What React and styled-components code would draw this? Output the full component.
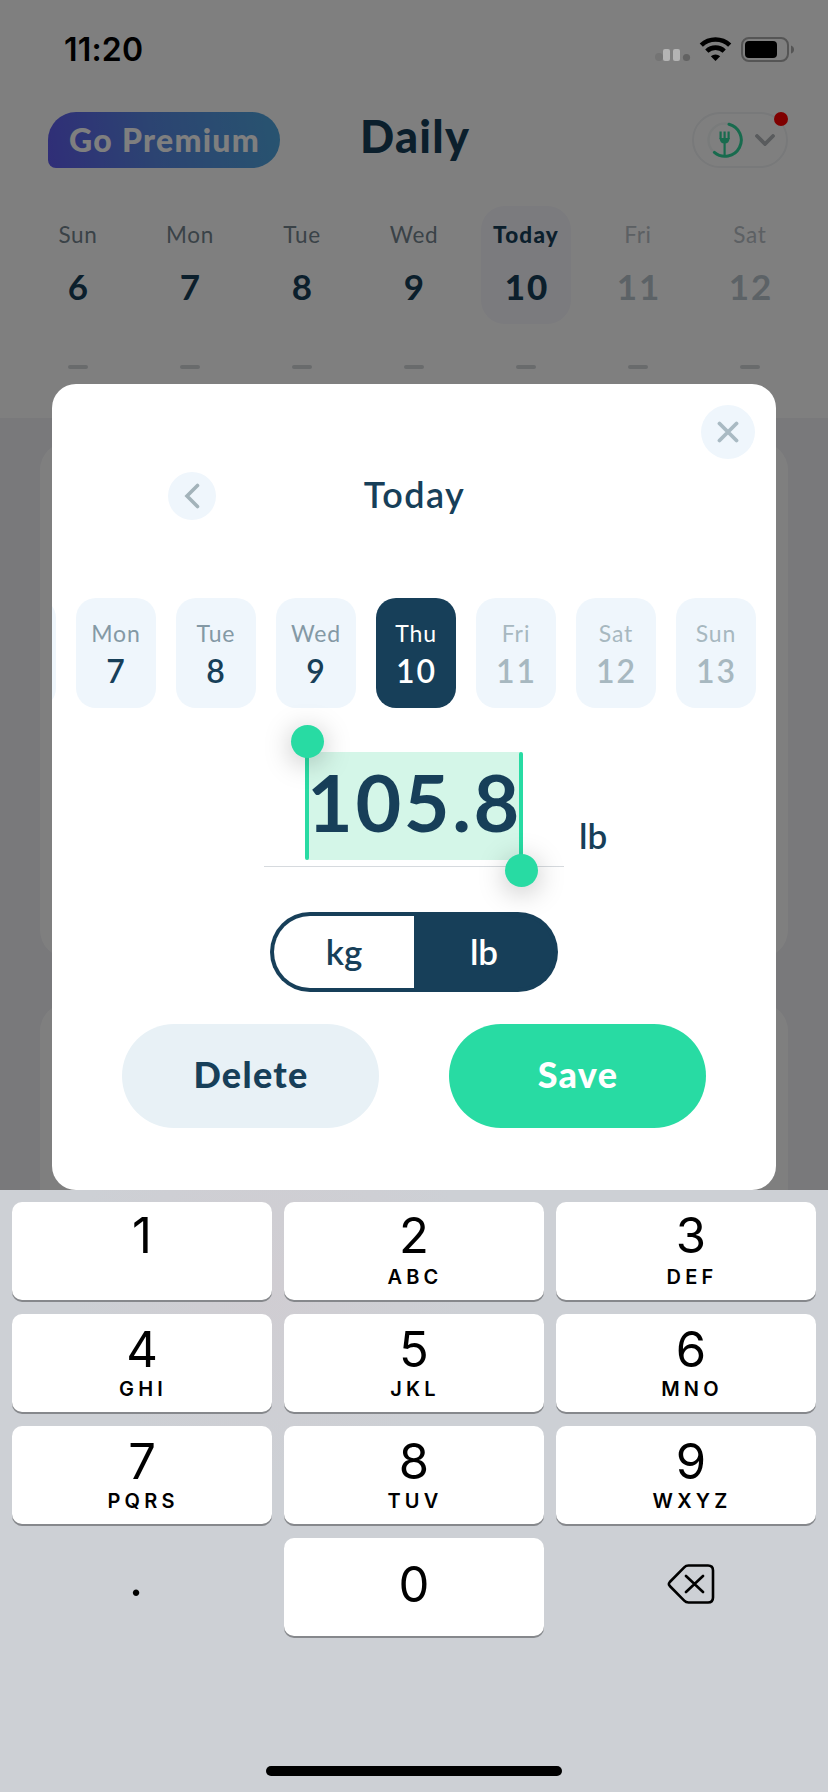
import { useState } from "react";
import styled, { createGlobalStyle } from "styled-components";

const navy = "#173f59";
const green = "#28dba3";

const GlobalStyle = createGlobalStyle`
  * {
    box-sizing: border-box;
  }
  body {
    margin: 0;
    font-family: Lato, "Open Sans", sans-serif;
    color: ${navy};
  }
  button {
    border: 0;
    padding: 0;
    background: none;
    color: inherit;
    font: inherit;
  }
`;

const Screen = styled.div`
  position: relative;
  width: 828px;
  height: 1792px;
  overflow: hidden;
  background: #f2f2f6;
`;

/* daily page behind the modal */
const DailyTop = styled.header`
  height: 418px;
  padding-top: 112px;
  background: #fff;
`;
const TitleBar = styled.div`
  display: grid;
  grid-template-columns: 232px 1fr 96px;
  height: 56px;
  padding: 0 40px 0 48px;
`;
const PremiumButton = styled.button`
  height: 56px;
  padding-left: 1px;
  border-radius: 28px 28px 28px 8px;
  background: linear-gradient(80deg, #605cf0, #5888e4 45%, #50a8e0);
  color: #fff;
  font-size: 32px;
  font-weight: 900;
  line-height: 52px;
  letter-spacing: 1.3px;
  white-space: nowrap;
`;
const PageTitle = styled.h1`
  margin: 0 0 0 6px;
  padding-left: 74px;
  font-size: 45px;
  font-weight: 900;
  line-height: 48px;
  letter-spacing: 1.3px;
`;
const ProfileButton = styled.button`
  position: relative;
  display: flex;
  align-items: center;
  justify-content: space-between;
  height: 56px;
  padding: 0 11px 0 13px;
  border: 2px solid #f0f2f4;
  border-radius: 28px;
`;
const RedDot = styled.span`
  position: absolute;
  top: -2px;
  right: -2px;
  width: 14px;
  height: 14px;
  border-radius: 50%;
  background: #f00;
`;
const Week = styled.div`
  display: grid;
  grid-template-columns: repeat(7, 90px);
  column-gap: 22px;
  padding: 38px 0 0 33px;
`;
const WeekDay = styled.div`
  display: flex;
  flex-direction: column;
  align-items: center;
  color: ${p => (p.future ? "#b8c4cc" : navy)};
`;
const WeekCell = styled.div`
  width: 90px;
  height: 118px;
  padding-top: 14px;
  border-radius: 24px;
  text-align: center;
  background: ${p => (p.today ? "#f6f6fc" : "transparent")};
`;
const WeekName = styled.div`
  height: 30px;
  font-size: 22.5px;
  line-height: 30px;
  letter-spacing: ${p => (p.today ? 1.2 : 0.7)}px;
  font-weight: ${p => (p.today ? 900 : 400)};
  color: ${p => (p.today ? navy : p.future ? "#b8c0c6" : "#74858f")};
`;
const WeekNumber = styled.div`
  margin-top: 16px;
  padding-left: 2px;
  font-size: 35px;
  line-height: 40px;
  letter-spacing: 2px;
  font-weight: ${p => (p.today ? 900 : 700)};
`;
const Dash = styled.div`
  width: 20px;
  height: 4px;
  margin-top: 41px;
  border-radius: 2px;
  background: #d2d6d8;
`;
const CardList = styled.main`
  display: flex;
  flex-direction: column;
  gap: 45px;
  padding: 24px 40px;
`;
const Card = styled.section`
  height: 516px;
  border-radius: 28px;
  background: #fff;
`;

/* everything drawn above the dimmed page */
const Overlay = styled.div`
  position: absolute;
  inset: 0;
  display: flex;
  flex-direction: column;
  background: rgba(0, 0, 0, 0.5);
`;
const StatusBar = styled.div`
  display: flex;
  align-items: flex-start;
  justify-content: space-between;
  height: 384px;
  padding: 30px 33px 0 64px;
`;
const Clock = styled.div`
  color: #000;
  font-family: Inter, sans-serif;
  font-size: 32px;
  font-weight: 600;
  line-height: 40px;
  letter-spacing: 0.2px;
`;
const StatusIcons = styled.svg`
  display: block;
  margin-top: 7px;
`;
const Modal = styled.section`
  display: flex;
  flex-direction: column;
  width: 724px;
  height: 806px;
  margin: 0 52px;
  overflow: hidden;
  border-radius: 24px;
  background: #fff;
`;
const CloseRow = styled.div`
  display: flex;
  justify-content: flex-end;
  padding: 21px 21px 0 0;
`;
const RoundButton = styled.button`
  display: flex;
  align-items: center;
  justify-content: center;
  width: ${p => p.size}px;
  height: ${p => p.size}px;
  border-radius: 50%;
  background: #eff6fc;
`;
const DateNav = styled.div`
  display: grid;
  grid-template-columns: 48px 1fr 48px;
  height: 48px;
  margin: 13px 116px 0;
`;
const DateTitle = styled.h2`
  margin: 0;
  padding-left: 1px;
  font-size: 36px;
  font-weight: 600;
  line-height: 44px;
  letter-spacing: 1.4px;
  text-align: center;
`;
const DayStrip = styled.div`
  display: flex;
  gap: 20px;
  margin: 78px 0 0 -76px;
`;
const DayPill = styled.button`
  flex: none;
  width: 80px;
  height: 110px;
  border-radius: 20px;
  text-align: center;
  background: ${p => (p.active ? navy : "#eff6fc")};
`;
const PillName = styled.div`
  font-size: 23px;
  line-height: 30px;
  letter-spacing: 0.9px;
  color: ${p => (p.active ? "#fff" : p.future ? "#a7b8c0" : "#8499a5")};
`;
const PillNumber = styled.div`
  margin-top: 6px;
  padding-left: 1px;
  font-size: 32px;
  font-weight: 600;
  line-height: 34px;
  letter-spacing: 2px;
  color: ${p => (p.active ? "#fff" : p.future ? "#a7b8c0" : navy)};
`;
const WeightRow = styled.div`
  display: flex;
  height: 115px;
  margin: 44px 0 0 212px;
`;
const WeightField = styled.div`
  display: flex;
  justify-content: center;
  width: 300px;
  border-bottom: 1px solid #d6dade;
`;
const Selection = styled.div`
  position: relative;
  width: 214px;
  height: 108px;
  background: #d4f6e8;
  font-size: 79px;
  font-weight: 700;
  line-height: 99px;
  letter-spacing: 2.6px;
  text-align: center;
  white-space: nowrap;
`;
const Handle = styled.span`
  position: absolute;
  top: 0;
  ${p => p.side}: -2px;
  width: 4px;
  height: 108px;
  border-radius: 2px;
  background: ${green};
  &::after {
    content: "";
    position: absolute;
    left: -14.5px;
    ${p => (p.side === "left" ? "top: -27px" : "bottom: -27px")};
    width: 33px;
    height: 33px;
    border-radius: 50%;
    background: ${green};
    box-shadow: 0 5px 28px rgba(0, 0, 0, 0.26);
  }
`;
const WeightUnit = styled.div`
  margin: 63px 0 0 15px;
  font-size: 35px;
  font-weight: 600;
  line-height: 40px;
`;
const UnitToggle = styled.div`
  display: grid;
  grid-template-columns: 1fr 1fr;
  width: 288px;
  height: 80px;
  margin: 45px auto 0;
  padding: 4px;
  border-radius: 40px;
  background: ${navy};
`;
const UnitButton = styled.button`
  height: 72px;
  padding: 0 0 3px;
  border-radius: 36px 0 0 36px;
  font-size: 35px;
  font-weight: 600;
  text-align: center;
  background: ${p => (p.active ? navy : "#fff")};
  color: ${p => (p.active ? "#fff" : navy)};
  &:last-child {
    border-radius: 0 36px 36px 0;
  }
`;
const Actions = styled.div`
  display: flex;
  gap: 70px;
  margin: 32px 70px 0;
`;
const ActionButton = styled.button`
  width: 257px;
  height: 104px;
  padding: 0 0 5px 1px;
  border-radius: 52px;
  font-size: 36px;
  font-weight: 900;
  letter-spacing: 1.3px;
  background: ${p => (p.primary ? green : "#e8f1f6")};
  color: ${p => (p.primary ? "#fff" : navy)};
`;

/* numeric keyboard */
const Keyboard = styled.div`
  flex: 1;
  padding: 12px;
  background: radial-gradient(
      ellipse 200px 200px at 270px 90px,
      #d0cdd2,
      transparent
    )
    #cdd0d5;
  color: #000;
  font-family: Inter, sans-serif;
`;
const Keys = styled.div`
  display: grid;
  grid-template-columns: repeat(3, 260px);
  gap: 14px 12px;
`;
const Key = styled.button`
  display: flex;
  flex-direction: column;
  align-items: center;
  height: 98px;
  padding-top: ${p => p.top}px;
  border-radius: 10px;
  background: ${p => (p.plain ? "none" : "#fff")};
  box-shadow: ${p => (p.plain ? "none" : "0 2px 0 #86888c")};
  /* the last column leans to the right, the dot to the left */
  &:nth-child(3n) {
    padding-left: 10px;
  }
  &:nth-child(10) {
    padding-right: 12px;
  }
`;
const KeyDigit = styled.span`
  font-size: 49px;
  line-height: 50px;
`;
const KeyLetters = styled.span`
  margin-top: ${p => p.top}px;
  padding-left: 2px;
  font-size: 20px;
  font-weight: 600;
  line-height: 24px;
  letter-spacing: 4.2px;
`;
const HomeBar = styled.div`
  width: 296px;
  height: 10px;
  margin: 130px auto 0;
  border-radius: 5px;
  background: #000;
`;

const week = [
  { name: "Sun", number: 6 },
  { name: "Mon", number: 7 },
  { name: "Tue", number: 8 },
  { name: "Wed", number: 9 },
  { name: "Today", number: 10, today: true },
  { name: "Fri", number: 11, future: true },
  { name: "Sat", number: 12, future: true }
];

const days = [
  { name: "Mon", number: 7 },
  { name: "Tue", number: 8 },
  { name: "Wed", number: 9 },
  { name: "Thu", number: 10 },
  { name: "Fri", number: 11, future: true },
  { name: "Sat", number: 12, future: true },
  { name: "Sun", number: 13, future: true }
];

const keys = [
  ["1", ""],
  ["2", "ABC"],
  ["3", "DEF"],
  ["4", "GHI"],
  ["5", "JKL"],
  ["6", "MNO"],
  ["7", "PQRS"],
  ["8", "TUV"],
  ["9", "WXYZ"]
];

const SignalWifiBattery = () => (
  <StatusIcons width="142" height="30" viewBox="0 0 142 30">
    <circle cx="6" cy="20" r="4" fill="#747474" />
    <rect x="10" y="12" width="7" height="12" rx="2" fill="#b4b4b4" />
    <rect x="20" y="12" width="7" height="12" rx="2" fill="#b4b4b4" />
    <circle cx="33.5" cy="20.5" r="3.6" fill="#626262" />
    <g fill="none" stroke="#000" strokeWidth="4.6">
      <path d="M48.3 8.2 A20.5 20.5 0 0 1 76.7 8.2" />
      <path d="M53.8 14.1 A12.5 12.5 0 0 1 71.2 14.1" />
    </g>
    <path d="M62.5 24 L57.8 19.2 A7.2 7.2 0 0 1 67.2 19.2 Z" />
    <rect
      x="89"
      y="1"
      width="46"
      height="23"
      rx="7"
      fill="none"
      stroke="#555"
      strokeWidth="2"
    />
    <rect x="92" y="4" width="32" height="17" rx="4" />
    <path d="M138 8.5 Q141 9.5 141 12.5 Q141 15.5 138 16.5 Z" fill="#555" />
  </StatusIcons>
);

const ForkIcon = () => (
  <svg width="36" height="36" viewBox="0 0 36 36" fill="none">
    <circle cx="18" cy="18" r="16.5" stroke="#f3f7f7" strokeWidth="2.5" />
    <path
      d="M22 2.2 A16.3 16.3 0 1 1 7.4 30.4"
      stroke="#30d79d"
      strokeWidth="3"
      strokeLinecap="round"
    />
    <path
      d="M13.6 9.5 V17 M21.6 9.5 V17 M17.6 9.5 V33"
      stroke="#30d79d"
      strokeWidth="2.2"
    />
    <path d="M12.5 16 H22.7 Q22.4 21.5 17.6 21.5 Q12.8 21.5 12.5 16 Z" fill="#30d79d" />
  </svg>
);

const ChevronIcon = () => (
  <svg width="20" height="12" viewBox="0 0 20 12">
    <path
      d="M2 2 L10 10 L18 2"
      fill="none"
      stroke="#b2b6ba"
      strokeWidth="3.8"
      strokeLinecap="round"
    />
  </svg>
);

const BackspaceIcon = () => (
  <svg width="48" height="40" viewBox="0 0 48 40" fill="none">
    <path
      d="M21.5 1.5 H41 Q46 1.5 46 6.5 V33.5 Q46 38.5 41 38.5 H21.5 Q19 38.5 17.2 36.7 L2.8 22 Q1 20 2.8 18 L17.2 3.3 Q19 1.5 21.5 1.5 Z M19 12 L36 28 M36 12 L19 28"
      stroke="#000"
      strokeWidth="2.6"
      strokeLinecap="round"
    />
  </svg>
);

const DailyPage = () => (
  <>
    <DailyTop>
      <TitleBar>
        <PremiumButton>Go Premium</PremiumButton>
        <PageTitle>Daily</PageTitle>
        <ProfileButton>
          <ForkIcon />
          <ChevronIcon />
          <RedDot />
        </ProfileButton>
      </TitleBar>
      <Week>
        {week.map(({ name, number, today, future }) => (
          <WeekDay key={name} future={future}>
            <WeekCell today={today}>
              <WeekName today={today} future={future}>
                {name}
              </WeekName>
              <WeekNumber today={today}>{number}</WeekNumber>
            </WeekCell>
            <Dash />
          </WeekDay>
        ))}
      </Week>
    </DailyTop>
    <CardList>
      <Card />
      <Card />
    </CardList>
  </>
);

const NumberKeyboard = () => (
  <Keyboard>
    <Keys>
      {keys.map(([digit, letters], i) => (
        <Key key={digit} top={i < 3 ? 9 : 11}>
          <KeyDigit>{digit}</KeyDigit>
          <KeyLetters top={i < 3 ? 4 : 2}>{letters}</KeyLetters>
        </Key>
      ))}
      <Key plain top={16}>
        <KeyDigit>.</KeyDigit>
      </Key>
      <Key top={22}>
        <KeyDigit>0</KeyDigit>
      </Key>
      <Key plain top={26}>
        <BackspaceIcon />
      </Key>
    </Keys>
    <HomeBar />
  </Keyboard>
);

export default function App() {
  const [selected, setSelected] = useState("Thu");
  const [unit, setUnit] = useState("lb");

  return (
    <Screen>
      <GlobalStyle />
      <DailyPage />
      <Overlay>
        <StatusBar>
          <Clock>11:20</Clock>
          <SignalWifiBattery />
        </StatusBar>
        <Modal>
          <CloseRow>
            <RoundButton size={54}>
              <svg width="22" height="22" viewBox="0 0 22 22">
                <path
                  d="M2.5 2.5 L19.5 19.5 M19.5 2.5 L2.5 19.5"
                  stroke="#a9bac3"
                  strokeWidth="3.8"
                  strokeLinecap="round"
                />
              </svg>
            </RoundButton>
          </CloseRow>
          <DateNav>
            <RoundButton size={48}>
              <svg width="16" height="26" viewBox="0 0 16 26">
                <path
                  d="M13.5 2.5 L3 13 L13.5 23.5"
                  fill="none"
                  stroke="#a3b3ba"
                  strokeWidth="3.6"
                  strokeLinecap="round"
                />
              </svg>
            </RoundButton>
            <DateTitle>Today</DateTitle>
          </DateNav>
          <DayStrip>
            <DayPill />
            {days.map(({ name, number, future }) => (
              <DayPill
                key={name}
                active={selected === name}
                onClick={() => setSelected(name)}
              >
                <PillName active={selected === name} future={future}>
                  {name}
                </PillName>
                <PillNumber active={selected === name} future={future}>
                  {number}
                </PillNumber>
              </DayPill>
            ))}
          </DayStrip>
          <WeightRow>
            <WeightField>
              <Selection>
                105.8
                <Handle side="left" />
                <Handle side="right" />
              </Selection>
            </WeightField>
            <WeightUnit>{unit}</WeightUnit>
          </WeightRow>
          <UnitToggle>
            {["kg", "lb"].map(u => (
              <UnitButton key={u} active={unit === u} onClick={() => setUnit(u)}>
                {u}
              </UnitButton>
            ))}
          </UnitToggle>
          <Actions>
            <ActionButton>Delete</ActionButton>
            <ActionButton primary>Save</ActionButton>
          </Actions>
        </Modal>
        <NumberKeyboard />
      </Overlay>
    </Screen>
  );
}
